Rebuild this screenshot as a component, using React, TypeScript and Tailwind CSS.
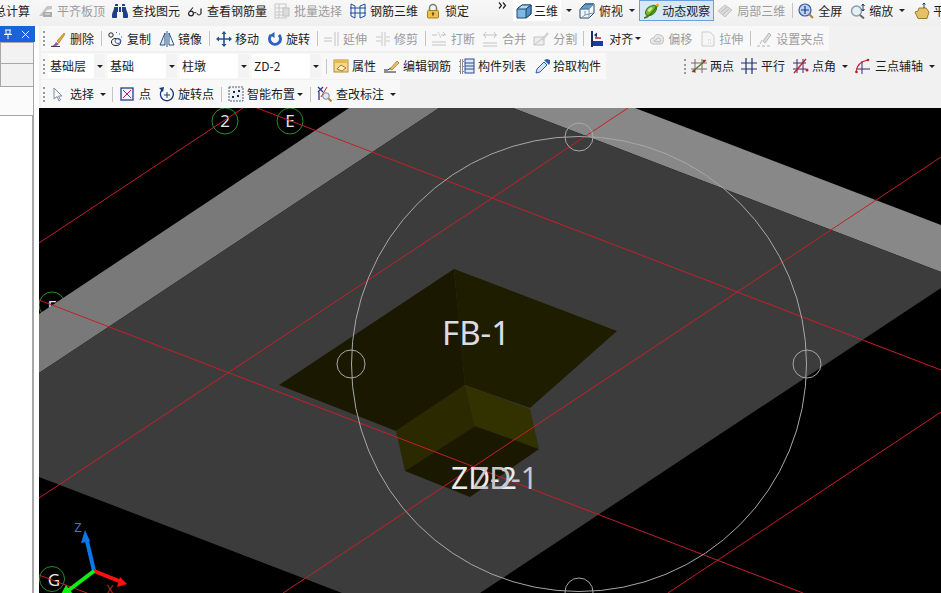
import React from "react";
import { FaBinoculars } from "react-icons/fa";

const cjk = { fontFamily: '"Noto Sans CJK SC", "Noto Sans", sans-serif' };

function S({ children, className = "" }: { children: React.ReactNode; className?: string }) {
  return (
    <svg viewBox="0 0 16 16" className={"w-4 h-4 shrink-0 " + className}>
      {children}
    </svg>
  );
}

function Tool({
  icon,
  label,
  gap = "gap-1",
  className = "",
  disabled = false,
}: {
  icon: React.ReactNode;
  label: string;
  gap?: string;
  className?: string;
  disabled?: boolean;
}) {
  return (
    <div className={"flex items-center shrink-0 " + gap + " " + className}>
      {icon}
      <span className={"text-[12px] leading-4 whitespace-nowrap " + (disabled ? "text-[#9c9c9c]" : "text-[#1c1c1c]")}>{label}</span>
    </div>
  );
}

const Sep = ({ className = "" }: { className?: string }) => <div className={"w-px h-[15px] bg-[#c4c4c4] shrink-0 " + className} />;
const Grip = ({ className = "" }: { className?: string }) => (
  <div className={"w-[2px] h-[15px] shrink-0 border-l-2 border-dotted border-[#9a9a9a] " + className} />
);
const Arrow = ({ className = "" }: { className?: string }) => (
  <div className={"w-0 h-0 shrink-0 border-l-[3px] border-r-[3px] border-t-[3px] border-l-transparent border-r-transparent border-t-[#222] " + className} />
);

function Select({ label, w, className = "" }: { label: string; w: string; className?: string }) {
  return (
    <div className={"flex h-[24px] shrink-0 " + className}>
      <div className={"bg-white flex items-center pl-[2px] text-[12px] text-[#1c1c1c] whitespace-nowrap " + w}>{label}</div>
      <div className="w-[11px] bg-[#f3f3f3] flex items-center justify-center">
        <Arrow />
      </div>
    </div>
  );
}

const I = {
  slab: (
    <S>
      <path d="M1 13 L9 3 L14 3 L14 6 L9 7 L5 13Z" fill="#c4c8c8" />
      <rect x="5" y="9" width="9" height="5" fill="#a8acac" />
      <path d="M7 11h5" stroke="#e8e8e8" />
    </S>
  ),
  glasses: (
    <S>
      <circle cx="4" cy="10.5" r="2.4" fill="none" stroke="#222" strokeWidth="1.2" />
      <path d="M3 8 L6 4.500" stroke="#222" strokeWidth="1.100" />
      <path d="M6.500 10 Q8 9 9.500 10" stroke="#222" fill="none" />
      <path d="M10 10.500 q2 3 4 0 L14 5.500" fill="none" stroke="#222" strokeWidth="1.200" />
    </S>
  ),
  batch: (
    <S>
      <rect x="1" y="1" width="11" height="14" fill="none" stroke="#c8c8c8" />
      <path d="M1 5h11M1 9h11M1 12h11M5 1v14" stroke="#c8c8c8" />
      <rect x="9" y="5" width="6" height="8" fill="#dcdcdc" stroke="#c0c0c0" />
    </S>
  ),
  rebar: (
    <S>
      <path d="M1 1v12M5 3v12M10 3v12M15 1v12M0 5h16M0 10h16" stroke="#1d4a9c" strokeWidth="1" fill="none" />
      <path d="M1 1l4 2M10 3l5-2M1 13l4 2M10 15l5-2" stroke="#1d4a9c" />
    </S>
  ),
  lock: (
    <S>
      <path d="M4.500 8 V5 a3.500 3.500 0 0 1 7 0 V8" fill="none" stroke="#7a7a7a" strokeWidth="1.500" />
      <rect x="2.500" y="7.500" width="11" height="7.500" rx="1" fill="#eec04c" stroke="#a87c18" />
      <circle cx="8" cy="10.500" r="1.200" fill="#6a4a10" />
      <path d="M8 11v2" stroke="#6a4a10" />
    </S>
  ),
  more: (
    <svg viewBox="0 0 9 7" className="w-[9px] h-[7px] shrink-0">
      <path d="M1 .5 L3.500 3.500 L1 6.500M5 .5 L7.500 3.500 L5 6.500" fill="none" stroke="#222" strokeWidth="1.200" />
    </svg>
  ),
  cube: (
    <S>
      <path d="M1 6 L6 2 L15 2 L15 11 L10 15 L1 15Z" fill="#7fb8e0" stroke="#1f4a70" />
      <path d="M1 6 L6 2 L15 2 L10 6Z" fill="#b4d8f0" stroke="#1f4a70" />
      <path d="M10 6 L15 2 L15 11 L10 15Z" fill="#4f8fc4" stroke="#1f4a70" />
    </S>
  ),
  top: (
    <S>
      <path d="M1 6 L6 1 L15 1 L15 10 L10 15 L1 15Z" fill="#f0f6fa" stroke="#2a4a68" />
      <path d="M1 6 L6 1 L15 1 L10 6Z" fill="#5f9fd0" stroke="#2a4a68" />
      <path d="M1 6 H10 V15 M10 6 L15 1 M6 8 L6 12 L2 15 M6 12 L14 10" fill="none" stroke="#7a98b0" />
    </S>
  ),
  orbit: (
    <S>
      <ellipse cx="8" cy="7.500" rx="6.500" ry="4" transform="rotate(-40 8 7.500)" fill="#76b72a" stroke="#3c7a10" />
      <ellipse cx="7" cy="6.500" rx="3" ry="1.500" transform="rotate(-40 7 6.500)" fill="#c4e890" />
      <path d="M1 15 Q7 14 15 2" fill="none" stroke="#3c7a10" strokeWidth="1.500" />
      <circle cx="14.500" cy="2" r="1.500" fill="#e8b020" />
    </S>
  ),
  local: (
    <S>
      <path d="M1 8 L8 2 L15 7 L8 14Z" fill="#dcdcdc" stroke="#c4c4c4" />
      <path d="M4 9 L10 4 M6 11 L12 6" stroke="#b8b8b8" />
    </S>
  ),
  full: (
    <S>
      <circle cx="7" cy="7" r="6" fill="#bcd4f0" stroke="#3a5aa0" strokeWidth="1.200" />
      <path d="M7 3v8M3 7h8" stroke="#1c3a88" strokeWidth="1.200" />
      <path d="M11 11 L15 15" stroke="#b08030" strokeWidth="2" />
    </S>
  ),
  zoom: (
    <S>
      <circle cx="6.500" cy="8" r="5" fill="#e6eef6" stroke="#8a9aa8" strokeWidth="1.400" />
      <path d="M10 12 L14 15.500" stroke="#606870" strokeWidth="2" />
      <path d="M13 1v7M11.500 3 L13 1 L14.500 3M11.500 6 L13 8 L14.500 6" fill="none" stroke="#1c3a70" />
    </S>
  ),
  pan: (
    <S>
      <path d="M4 15.500 L1 9 L4 8 L5 5 L12 5 L15 9 L13 15.500Z" fill="#e4c068" stroke="#9c7a28" />
      <path d="M10 0v5M8.500 1.500 L10 0 L11.500 1.500" stroke="#1c3a70" fill="none" />
    </S>
  ),
  del: (
    <S>
      <path d="M1 15 Q4 15 6 11 L9 13 Q6 16 1 15Z" fill="#8a5ca8" />
      <path d="M7 10 L14 2 L15 3 L9 12Z" fill="#e8a830" stroke="#806020" strokeWidth=".5" />
      <path d="M1 15.500h9" stroke="#444" />
    </S>
  ),
  copy: (
    <S>
      <circle cx="4" cy="4" r="2.200" fill="none" stroke="#222" />
      <path d="M9 1.500 h1M12 3h1M14 6h1" stroke="#3a66b0" />
      <ellipse cx="9" cy="11" rx="4.500" ry="3.500" fill="none" stroke="#222" />
      <ellipse cx="11" cy="10" rx="3" ry="2.500" fill="none" stroke="#3a66b0" />
    </S>
  ),
  mirror: (
    <S>
      <path d="M6 2 L1 14 H6Z" fill="#d8e8f4" stroke="#24508a" />
      <path d="M10 2 L15 14 H10Z" fill="#fff" stroke="#24508a" />
      <path d="M8 0v16" stroke="#24508a" />
    </S>
  ),
  move: (
    <S>
      <path d="M8 1v14M1 8h14" stroke="#23538f" strokeWidth="1.600" />
      <path d="M8 0 L5.500 3h5ZM8 16 L5.500 13h5ZM0 8 L3 5.500v5ZM16 8 L13 5.500v5Z" fill="#23538f" />
    </S>
  ),
  rotate: (
    <S>
      <path d="M4 4 A5.500 5.500 0 1 0 12 4" fill="none" stroke="#2a62c4" strokeWidth="3" />
      <path d="M7.500 7 V1 L3 4Z" fill="#2a62c4" />
    </S>
  ),
  extend: (
    <S>
      <path d="M1 7h8M1 10h8M12 1v14M15 1v14" stroke="#c4c4c4" fill="none" />
    </S>
  ),
  trim: (
    <S>
      <path d="M7 1v14M10 1v14M1 6h5M11 6h4M1 10h5M11 10h4" stroke="#c8c8c8" fill="none" />
    </S>
  ),
  breakI: (
    <S>
      <path d="M1 4h5M10 4h5M1 11h14M1 14h14" stroke="#c4c4c4" fill="none" />
      <path d="M7 1 L10 7" stroke="#d0d0d0" />
      <path d="M12 1l2 2-2 2" stroke="#c4c4c4" fill="none" />
    </S>
  ),
  merge: (
    <S>
      <path d="M1 4h14M1 12h14M1 15h14" stroke="#c4c4c4" fill="none" />
      <path d="M4 1 L2 4 L4 7M12 1l2 3-2 3" stroke="#c4c4c4" fill="none" />
    </S>
  ),
  split: (
    <S>
      <path d="M1 6h10v8H1Z" fill="#ececec" stroke="#c4c4c4" />
      <path d="M1 14 L11 6" stroke="#c4c4c4" />
      <path d="M9 9 L15 2" stroke="#cfcfcf" strokeWidth="2" />
    </S>
  ),
  align: (
    <S>
      <path d="M2 0v16" stroke="#1c2a68" strokeWidth="2" />
      <rect x="3" y="10" width="10" height="5" fill="#1c3aa0" />
      <path d="M5 7h6" stroke="#c02020" strokeWidth="1.500" />
      <path d="M4 4 L7 1.500V6.500Z" fill="#1c2a68" />
    </S>
  ),
  offset: (
    <S>
      <path d="M2 12 Q0 7 5 7 Q6 2 11 4 Q16 5 14 11 Q14 13 11 13H4Q2 13 2 12Z" fill="#e8e8e8" stroke="#c0c0c0" />
      <path d="M5 10.500 Q4 9 7 9 Q8 6 10 7 Q13 8 11 11Z" fill="none" stroke="#c0c0c0" />
    </S>
  ),
  stretch: (
    <S>
      <path d="M2 1h8l4 4v10H2Z" fill="#f6f6f6" stroke="#cdcdcd" />
      <path d="M8 9h4M8 12h4" stroke="#cdcdcd" strokeDasharray="1 1" />
    </S>
  ),
  grips: (
    <S>
      <path d="M1 15h3M6 15h3M11 15h3" stroke="#b8b8b8" />
      <path d="M7 10 L13 2 L15 4 L9 12Z" fill="#dcdcdc" stroke="#b8b8b8" />
      <path d="M4 13 L6 9" stroke="#c0c0c0" />
    </S>
  ),
  props: (
    <S>
      <rect x="1" y="2" width="14" height="12" fill="#f4d890" stroke="#b88c30" />
      <path d="M1 2h14v3H1Z" fill="#e8b850" />
      <path d="M4 11 L8 7 L13 10 L9 13Z" fill="#fff0c0" stroke="#a8782a" />
    </S>
  ),
  editRebar: (
    <S>
      <path d="M0 12 Q4 13 7 10" fill="none" stroke="#222" />
      <path d="M6 11 L13 3 L15 5 L8 12Z" fill="#f0c060" stroke="#806020" strokeWidth=".6" />
      <path d="M0 14h12" stroke="#222" />
    </S>
  ),
  list: (
    <S>
      <path d="M1 2h3v3H1ZM1 7h3v3H1ZM1 12h3v3H1Z" fill="none" stroke="#222" strokeDasharray="1 1" />
      <rect x="6" y="1" width="9" height="14" fill="#dfe8f6" stroke="#2a4a90" />
      <path d="M6 5h9M6 8h9M6 11h9" stroke="#2a4a90" />
    </S>
  ),
  pick: (
    <S>
      <path d="M1 15 L2 11 L9 4 L12 7 L5 14Z" fill="#cfe6f8" stroke="#2a62a8" />
      <path d="M9 2 L14 7 L15 5 L15 2 L12 1Z" fill="#2a62a8" />
    </S>
  ),
  twoPts: (
    <S>
      <path d="M4 1v14M11 1v14M0 5h16M0 11h16" stroke="#7a6a6a" />
      <path d="M1 14 L15 2" stroke="#4a7a20" strokeWidth="1.300" />
      <circle cx="3" cy="13" r="1.300" fill="#c02020" />
      <circle cx="13" cy="3" r="1.300" fill="#c02020" />
    </S>
  ),
  parallel: (
    <S>
      <path d="M5 0v16M11 0v16M0 5h16M0 11h16" stroke="#202e78" strokeWidth="1.200" />
    </S>
  ),
  angle: (
    <S>
      <path d="M4 1v14M10 1v14M0 5h13M0 11h13" stroke="#3a2a68" />
      <path d="M1 15 L13 1" stroke="#c02030" strokeWidth="1.300" />
      <circle cx="14" cy="12" r="1.500" fill="#c02020" />
    </S>
  ),
  arcAxis: (
    <S>
      <path d="M1 11h14M7 3v13" stroke="#3a2a68" />
      <path d="M1 14 Q2 4 13 2" fill="none" stroke="#c02030" strokeWidth="1.200" />
      <circle cx="1.500" cy="14" r="1.300" fill="#c02020" />
      <circle cx="13" cy="2" r="1.300" fill="#c02020" />
    </S>
  ),
  select: (
    <S>
      <path d="M5 2 L5 13 L8 10.500 L10 15 L11.500 14 L9.500 10 L13 10Z" fill="#fff" stroke="#7c8a9c" />
    </S>
  ),
  point: (
    <S>
      <rect x="2" y="2" width="12" height="12" fill="#f4f6fc" stroke="#2a3a8a" strokeWidth="1.300" />
      <path d="M4 4 L12 12M12 4 L4 12" stroke="#c02040" />
    </S>
  ),
  rotPt: (
    <S>
      <path d="M3 4 A6.500 6.500 0 1 0 11 2.500" fill="none" stroke="#1d3a80" strokeWidth="1.400" />
      <path d="M0 2 L5 1 L4 6Z" fill="#1d3a80" />
      <path d="M8 6v6M5 9h6" stroke="#1d3a80" />
    </S>
  ),
  smart: (
    <S>
      <rect x="1" y="1" width="14" height="14" fill="#eef2f6" stroke="#50606c" strokeDasharray="2 1" />
      <path d="M5 5h2v2H5ZM10 4h2v2h-2ZM4 10h2v2H4ZM9 9h2v2H9Z" fill="#1c2a40" />
    </S>
  ),
  annotate: (
    <S>
      <path d="M2 1 L7 6 M7 1 L2 6 M3 6v8" stroke="#2a3a90" strokeWidth="1.300" />
      <path d="M11 1 L5 11" stroke="#c02020" />
      <circle cx="10" cy="10" r="3.300" fill="#dceaf4" stroke="#7a8a90" />
      <path d="M12.500 12.500 L15.500 15.500" stroke="#b88828" strokeWidth="2" />
    </S>
  ),
};

function TopRow() {
  return (
    <div className="h-[26px] w-full flex items-start overflow-hidden bg-gradient-to-b from-[#f8f8f8] to-[#efefef] shrink-0" style={cjk}>
      <div className="flex items-center h-[21px]">
        <div className="w-[30px] overflow-hidden flex justify-end shrink-0">
          <span className="text-[12px] leading-4 text-[#1c1c1c] whitespace-nowrap">汇总计算</span>
        </div>
        <Tool className="ml-2" gap="gap-[3px]" icon={I.slab} label="平齐板顶" disabled />
        <Tool className="ml-[7px]" icon={<FaBinoculars className="w-4 h-4 text-[#1d3f86] shrink-0" />} label="查找图元" />
        <Tool className="ml-[7px]" icon={I.glasses} label="查看钢筋量" />
        <Tool className="ml-[7px]" gap="gap-1" icon={I.batch} label="批量选择" disabled />
        <Tool className="ml-2" icon={I.rebar} label="钢筋三维" />
        <Tool className="ml-[7px]" icon={I.lock} label="锁定" />
        <div className="ml-[29px] w-[15px] h-[21px] shrink-0 flex items-start pt-[2px]">{I.more}</div>
        <div className="flex items-center h-[21px] bg-white shrink-0">
          <Tool className="pl-[3px] pr-[3px]" gap="gap-[2px]" icon={I.cube} label="三维" />
        </div>
        <Arrow className="ml-[5px]" />
        <Tool className="ml-[7px]" icon={I.top} label="俯视" />
        <Arrow className="ml-[6px]" />
        <div className="ml-[4px] h-[21px] bg-[#d6e7f8] border border-[#6ca0dc] flex items-center pl-[3px] pr-[3px] shrink-0">
          <Tool gap="gap-[3px]" icon={I.orbit} label="动态观察" />
        </div>
        <Tool className="ml-[3px]" icon={I.local} label="局部三维" disabled />
        <Sep className="ml-[7px]" />
        <Tool className="ml-[5px]" icon={I.full} label="全屏" />
        <Tool className="ml-2" gap="gap-[3px]" icon={I.zoom} label="缩放" />
        <Arrow className="ml-[6px]" />
        <Tool className="ml-[9px]" gap="gap-[3px]" icon={I.pan} label="平移" />
      </div>
    </div>
  );
}

function Row2() {
  return (
    <div className="h-[27px] flex items-start shrink-0" style={cjk}>
      <div className="ml-[2px] h-[25px] bg-[#f8f8f8] flex items-center pr-[5px]">
        <Grip className="ml-[2px]" />
        <Tool className="ml-[5px]" icon={I.del} label="删除" />
        <Sep className="ml-[7px]" />
        <Tool className="ml-[5px]" icon={I.copy} label="复制" />
        <Tool className="ml-2" gap="gap-[3px]" icon={I.mirror} label="镜像" />
        <Sep className="ml-[7px]" />
        <Tool className="ml-[6px]" gap="gap-[3px]" icon={I.move} label="移动" />
        <Tool className="ml-2" gap="gap-[3px]" icon={I.rotate} label="旋转" />
        <Sep className="ml-[7px]" />
        <Tool className="ml-[5px]" icon={I.extend} label="延伸" disabled />
        <Tool className="ml-2" gap="gap-[3px]" icon={I.trim} label="修剪" disabled />
        <Sep className="ml-[7px]" />
        <Tool className="ml-[5px]" icon={I.breakI} label="打断" disabled />
        <Tool className="ml-[7px]" icon={I.merge} label="合并" disabled />
        <Tool className="ml-[7px]" icon={I.split} label="分割" disabled />
        <Sep className="ml-[6px]" />
        <Tool className="ml-[6px]" gap="gap-[3px]" icon={I.align} label="对齐" />
        <Arrow className="ml-[2px]" />
        <Tool className="ml-2" gap="gap-[3px]" icon={I.offset} label="偏移" disabled />
        <Tool className="ml-2" gap="gap-[3px]" icon={I.stretch} label="拉伸" disabled />
        <Sep className="ml-[7px]" />
        <Tool className="ml-[5px]" icon={I.grips} label="设置夹点" disabled />
      </div>
    </div>
  );
}

function Row3() {
  return (
    <div className="h-[27px] flex items-start shrink-0" style={cjk}>
      <div className="ml-[2px] h-[26px] w-[565px] bg-[#f8f8f8] flex items-center shrink-0">
        <Grip className="ml-[2px]" />
        <Select className="ml-[3px]" label="基础层" w="w-[46px]" />
        <Select className="ml-[3px]" label="基础" w="w-[58px]" />
        <Select className="ml-[3px]" label="柱墩" w="w-[58px]" />
        <Select className="ml-[3px]" label="ZD-2" w="w-[58px]" />
        <Sep className="ml-[5px]" />
        <Tool className="ml-[6px]" gap="gap-[3px]" icon={I.props} label="属性" />
        <Tool className="ml-2" gap="gap-[3px]" icon={I.editRebar} label="编辑钢筋" />
        <Tool className="ml-2" gap="gap-[3px]" icon={I.list} label="构件列表" />
        <Tool className="ml-[9px]" gap="gap-[2px]" icon={I.pick} label="拾取构件" />
      </div>
      <div className="ml-[75px] h-[26px] flex-1 flex items-center">
        <Grip className="ml-[3px]" />
        <Tool className="ml-[5px]" gap="gap-[3px]" icon={I.twoPts} label="两点" />
        <Tool className="ml-[7px]" icon={I.parallel} label="平行" />
        <Tool className="ml-2" gap="gap-[3px]" icon={I.angle} label="点角" />
        <Arrow className="ml-[6px]" />
        <Tool className="ml-[7px]" icon={I.arcAxis} label="三点辅轴" />
        <Arrow className="ml-[6px]" />
      </div>
    </div>
  );
}

function Row4() {
  return (
    <div className="h-[28px] flex items-start shrink-0" style={cjk}>
      <div className="ml-[2px] h-[28px] w-[359px] bg-[#f8f8f8] flex items-center shrink-0">
        <Grip className="ml-[2px]" />
        <Tool className="ml-[4px]" gap="gap-[5px]" icon={I.select} label="选择" />
        <Arrow className="ml-[6px]" />
        <Sep className="ml-[6px]" />
        <Tool className="ml-[6px]" gap="gap-[4px]" icon={I.point} label="点" />
        <Tool className="ml-2" gap="gap-[3px]" icon={I.rotPt} label="旋转点" />
        <Sep className="ml-[7px]" />
        <Tool className="ml-[6px]" gap="gap-[3px]" icon={I.smart} label="智能布置" />
        <Arrow className="ml-[2px]" />
        <Sep className="ml-[7px]" />
        <Tool className="ml-[5px]" gap="gap-1" icon={I.annotate} label="查改标注" />
        <Arrow className="ml-[6px]" />
      </div>
    </div>
  );
}

function Sidebar() {
  return (
    <div className="w-[39px] shrink-0 bg-white flex flex-col">
      <div className="w-[35px] h-[16px] bg-[#1a63d8] flex items-center shrink-0">
        <svg viewBox="0 0 10 10" className="w-[10px] h-[10px] ml-[3px]">
          <path d="M2 1h6M3 1v4h4V1M1 5.500h8M5 6v4" stroke="#fff" fill="none" />
        </svg>
        <svg viewBox="0 0 10 10" className="w-[9px] h-[9px] ml-[8px]">
          <path d="M1 1l8 8M9 1l-8 8" stroke="#fff" />
        </svg>
      </div>
      <div className="w-[34px] h-[22px] bg-[#f2f2f2] border border-[#a8a8a8] shrink-0" />
      <div className="w-[34px] h-[23px] bg-[#f2f2f2] border border-t-0 border-[#a8a8a8] shrink-0" />
      <div className="w-[34px] h-[28px] bg-[#fbfbfb] border-r border-[#a8a8a8] shrink-0" />
      <div className="w-[34px] flex-1 bg-white border-t border-r-2 border-[#a8a8a8]" />
    </div>
  );
}

function Scene() {
  const red = "#c61f28";
  const grey = "#a8a8a8";
  return (
    <svg viewBox="39 108 902 485" className="block w-[902px] h-[485px] bg-black">
      <g fill="none" stroke="#2c8a2c">
        <circle cx="52" cy="305" r="13" />
        <circle cx="225" cy="121" r="13" />
        <circle cx="290" cy="121" r="13" />
        <circle cx="52" cy="579" r="12.500" />
      </g>
      <g fontFamily='"Noto Sans", sans-serif' fontSize="17" fill="#e6e6e6" textAnchor="middle">
        <text x="52" y="313">F</text>
        <text x="225" y="127">2</text>
        <text x="290" y="127">E</text>
        <text x="54" y="586">G</text>
      </g>
      <polygon points="39,314 349,108 439,108 39,373" fill="#797979" />
      <polygon points="513,108 635,108 941,225 941,272" fill="#888888" />
      <polygon points="439,108 513,108 941,272 941,288 480,593 342,593 39,477 39,373" fill="#3c3c3c" />
      <polygon points="454,269 617,331 530,408 465,385" fill="#1e1d00" />
      <polygon points="454,269 465,385 396,431 279,385" fill="#1a1900" />
      <polygon points="465,385 475,426 405,471 396,431" fill="#2a2900" />
      <polygon points="465,385 530,409 539,449 475,426" fill="#323100" />
      <polygon points="475,426 539,449 470,497 405,471" fill="#1a1900" />
      <g stroke={red} strokeWidth="1" fill="none">
        <path d="M39 243 L243 108" />
        <path d="M628 108 L39 498" />
        <path d="M941 157 L283 593" />
        <path d="M941 412 L668 593" />
        <path d="M257 108 L941 370" />
        <path d="M39 300 L803 593" />
        <path d="M39 575 L87 593" />
      </g>
      <g stroke={grey} strokeWidth="1" fill="none">
        <circle cx="579" cy="364" r="227.500" />
        <circle cx="579" cy="137" r="14" />
        <circle cx="351" cy="364" r="14" />
        <circle cx="807" cy="364" r="14" />
        <circle cx="579" cy="592" r="14" />
      </g>
      <g fontFamily='"Noto Sans", sans-serif'>
        <text x="442" y="345" fontSize="33" fill="#dcdce6">FB-1</text>
        <text x="451" y="489" fontSize="30" fill="#ecebf2">ZD-2</text>
        <text x="472" y="489" fontSize="30" fill="#c8c8cc">ZD-1</text>
      </g>
      <path d="M94 571 L87 541" stroke="#0a78e8" strokeWidth="4" />
      <polygon points="85,530 90,541 81,543" fill="#0a78e8" />
      <text x="78" y="532" fontSize="13" fill="#2a7ae0" textAnchor="middle" fontFamily='"Noto Sans", sans-serif'>Z</text>
      <path d="M94 571 L119 581" stroke="#ff1010" strokeWidth="4" />
      <polygon points="127,584 117,587 120,577" fill="#ff1010" />
      <text x="110" y="594" fontSize="12" fill="#a83030" textAnchor="middle" fontFamily='"Noto Sans", sans-serif'>X</text>
      <path d="M94 571 L69 590" stroke="#10f010" strokeWidth="4" />
      <polygon points="60,596 66,585 73,594" fill="#10f010" />
    </svg>
  );
}

export default function App() {
  return (
    <div className="w-[941px] h-[593px] overflow-hidden flex flex-col bg-[#f1f1f1]">
      <TopRow />
      <div className="flex h-[567px]">
        <Sidebar />
        <div className="flex-1 min-w-0 flex flex-col">
          <Row2 />
          <Row3 />
          <Row4 />
          <Scene />
        </div>
      </div>
    </div>
  );
}
